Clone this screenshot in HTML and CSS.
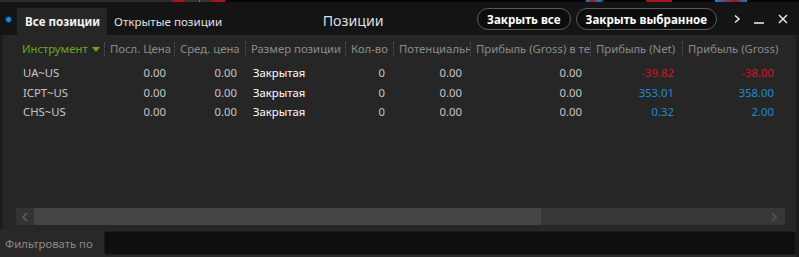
FILE: index.html
```html
<!DOCTYPE html>
<html>
<head>
    <title>Позиции</title>
    <link rel="stylesheet" href="styles.css">
</head>
<body>
    <div class="chart-strip"></div>
    <div class="window">
        <div class="top-bar">
            <span class="status-dot"></span>
            <div class="tabs">
                <div class="tab active">Все позиции</div>
                <div class="tab">Открытые позиции</div>
            </div>
            <div class="title">Позиции</div>
            <div class="actions">
                <button class="pill">Закрыть все</button>
                <button class="pill">Закрыть выбранное</button>
            </div>
            <div class="win-icons">
                <span class="icon">
                    <svg width="8" height="10" viewBox="0 0 8 10"><path d="M2 1.5 L6 5 L2 8.5" fill="none" stroke="#e6e6e6" stroke-width="1.6"/></svg>
                </span>
                <span class="icon">
                    <svg width="11" height="10" viewBox="0 0 11 10"><path d="M0 9 H10" stroke="#e6e6e6" stroke-width="1.6"/></svg>
                </span>
                <span class="icon">
                    <svg width="10" height="10" viewBox="0 0 10 10"><path d="M1 1 L9 9 M9 1 L1 9" stroke="#e6e6e6" stroke-width="1.5"/></svg>
                </span>
            </div>
        </div>

        <div class="panel">
            <div class="grid head">
                <div class="hcell first sort">Инструмент <svg class="caret" width="8" height="5" viewBox="0 0 8 5"><path d="M0 0 H8 L4 5 Z" fill="#6aa61e"/></svg></div>
                <div class="hcell">Посл. Цена</div>
                <div class="hcell">Сред. цена</div>
                <div class="hcell">Размер позиции</div>
                <div class="hcell">Кол-во</div>
                <div class="hcell">Потенциальная прибыль</div>
                <div class="hcell">Прибыль (Gross) в текущей валюте</div>
                <div class="hcell">Прибыль (Net)</div>
                <div class="hcell">Прибыль (Gross)</div>
            </div>

            <div class="rows">
                <div class="grid row">
                    <div class="cell sym">UA~US</div>
                    <div class="cell num">0.00</div>
                    <div class="cell num">0.00</div>
                    <div class="cell state">Закрытая</div>
                    <div class="cell num">0</div>
                    <div class="cell num">0.00</div>
                    <div class="cell num">0.00</div>
                    <div class="cell num neg">-39.82</div>
                    <div class="cell num neg">-38.00</div>
                </div>
                <div class="grid row">
                    <div class="cell sym">ICPT~US</div>
                    <div class="cell num">0.00</div>
                    <div class="cell num">0.00</div>
                    <div class="cell state">Закрытая</div>
                    <div class="cell num">0</div>
                    <div class="cell num">0.00</div>
                    <div class="cell num">0.00</div>
                    <div class="cell num pos">353.01</div>
                    <div class="cell num pos">358.00</div>
                </div>
                <div class="grid row">
                    <div class="cell sym">CHS~US</div>
                    <div class="cell num">0.00</div>
                    <div class="cell num">0.00</div>
                    <div class="cell state">Закрытая</div>
                    <div class="cell num">0</div>
                    <div class="cell num">0.00</div>
                    <div class="cell num">0.00</div>
                    <div class="cell num pos">0.32</div>
                    <div class="cell num pos">2.00</div>
                </div>
            </div>

            <div class="hscroll">
                <div class="arrow">
                    <svg width="8" height="10" viewBox="0 0 8 10"><path d="M6 1 L2 5 L6 9" fill="none" stroke="#555" stroke-width="2"/></svg>
                </div>
                <div class="thumb"></div>
                <div class="track">
                    <svg width="8" height="10" viewBox="0 0 8 10"><path d="M2 1 L6 5 L2 9" fill="none" stroke="#4e4e4e" stroke-width="2"/></svg>
                </div>
            </div>
        </div>

        <div class="filter-bar">
            <label for="filter">Фильтровать по</label>
            <input id="filter" type="text">
        </div>
    </div>
</body>
</html>
```

FILE: styles.css
```css
body {
    margin: 0;
    padding: 0;
    background: #1b1b1b;
    font-family: "Noto Sans", "Open Sans", sans-serif;
    font-size: 11.3px;
    color: #c8c8c8;
}

.chart-strip {
    height: 2px;
    background: linear-gradient(to right,
        #2c2c2c 0, #2c2c2c 172px,
        #a8111e 172px, #a8111e 185px,
        #333 185px, #333 199px,
        #1d7fc4 199px, #1d7fc4 200px,
        #333 200px, #333 212px,
        #a8111e 212px, #a8111e 225px,
        #050505 225px, #050505 586px,
        #1d7fc4 586px, #a8111e 592px, #1d7fc4 600px, #050505 605px,
        #050505 646px, #a8111e 646px, #a8111e 672px, #050505 672px,
        #050505 715px, #1d7fc4 715px, #a8111e 735px, #1d7fc4 747px, #050505 747px);
}

.window {
    display: flex;
    flex-direction: column;
    height: 255px;
}

/* header */
.top-bar {
    display: flex;
    align-items: flex-end;
    height: 33px;
    background: #141414;
    box-sizing: border-box;
}

.status-dot {
    width: 5px;
    height: 5px;
    border-radius: 50%;
    background: #1d8ad6;
    border: 1px solid #0a3350;
    margin: 0 5px 12px 5px;
    align-self: flex-end;
}

.tabs {
    display: flex;
    height: 27px;
}

.tab {
    display: flex;
    align-items: center;
    padding: 0 7px 1px 7px;
    color: #e0e0e0;
    font-size: 11.6px;
}

.tab.active {
    background: #262626;
    font-weight: bold;
    padding: 0 7px 1px 8px;
    color: #f2f2f2;
}

.title {
    flex: 1;
    text-align: center;
    font-size: 14.2px;
    color: #dedede;
    align-self: center;
    padding-top: 3px;
}

.actions {
    display: flex;
    gap: 5px;
    align-self: flex-start;
    margin-top: 6px;
}

.pill {
    height: 22px;
    padding: 0 9px;
    background: #0d0d0d;
    border: 1.5px solid #5a5a5a;
    border-radius: 11px;
    color: #fff;
    font-family: "Noto Sans", "Open Sans", sans-serif;
    font-weight: bold;
    font-size: 11.6px;
}

.win-icons {
    display: flex;
    align-self: flex-start;
    margin-top: 12px;
    margin-left: 13px;
    margin-right: 10px;
    gap: 10px;
}

.icon {
    display: flex;
    width: 13px;
    justify-content: center;
}

/* table */
.panel {
    flex: 1;
    background: #262626;
    margin: 0 3px 0 3px;
    display: flex;
    flex-direction: column;
    padding-left: 13px;
    padding-right: 11px;
}

.grid {
    display: grid;
    grid-template-columns: 88px 70px 71px 100px 48px 77px 120px 92px 100px;
}

.head {
    margin-top: 7px;
    height: 14px;
    line-height: 14px;
}

.hcell {
    white-space: nowrap;
    overflow: hidden;
    color: #8c8c8c;
    padding-left: 5px;
    border-left: 1px dotted #555;
}

.hcell.first {
    border-left: none;
    padding-left: 6px;
}

.sort {
    color: #6aa61e;
}

.caret {
    vertical-align: 1px;
    margin-left: 1px;
}

.rows {
    margin-top: 7px;
    flex: 1;
}

.row {
    height: 19.5px;
    line-height: 19.5px;
}

.cell {
    white-space: nowrap;
    color: #c8c8c8;
}

.sym {
    padding-left: 7px;
}

.num {
    text-align: right;
    padding-right: 8px;
}

.state {
    padding-left: 8px;
    color: #fff;
}

.neg {
    color: #d4142b;
}

.pos {
    color: #1e8ad8;
}

.hscroll {
    display: flex;
    height: 17px;
    margin-bottom: 4px;
}

.arrow {
    width: 18px;
    background: #333;
    display: flex;
    align-items: center;
    justify-content: center;
}

.thumb {
    width: 507px;
    background: #454545;
}

.track {
    flex: 1;
    background: #373737;
    display: flex;
    align-items: center;
    justify-content: flex-end;
    padding-right: 7px;
}

/* filter */
.filter-bar {
    display: flex;
    align-items: center;
    height: 28px;
    background: #282828;
    margin: 0 3px 0 0;
    padding-left: 5px;
    box-sizing: border-box;
}

.filter-bar label {
    color: #8a8a8a;
    width: 99px;
}

.filter-bar input {
    flex: 1;
    height: 24px;
    box-sizing: border-box;
    background: #0f0f0f;
    border: 1px solid #1a1a1a;
    border-radius: 3px;
    margin-right: 0;
}
```
